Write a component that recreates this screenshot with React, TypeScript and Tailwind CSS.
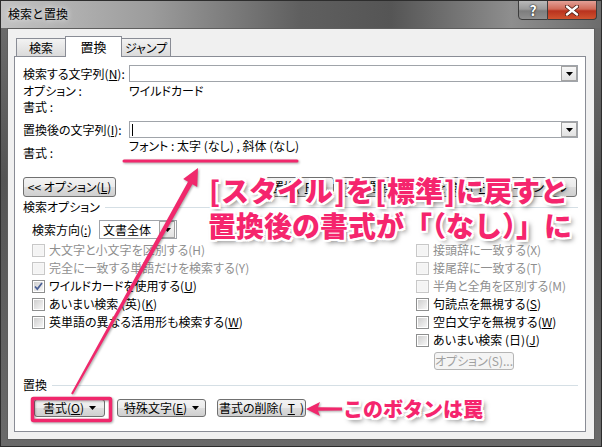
import React from 'react';

// mnemonic helper: underline the access key inside "(X)"
function Mn({ text, k, u = true }: { text: string; k?: string; u?: boolean }) {
  if (!k || !u) return <>{text}</>;
  const i = text.lastIndexOf(`(${k})`);
  if (i < 0) return <>{text}</>;
  return (
    <>
      {text.slice(0, i + 1)}
      <span className="underline underline-offset-[1px]">{k}</span>
      {text.slice(i + 2)}
    </>
  );
}

function Caret() {
  return (
    <svg width="7" height="4" viewBox="0 0 7 4">
      <path d="M0 0h7L3.5 4z" fill="#000" />
    </svg>
  );
}

function DropPart() {
  return (
    <div className="w-[16px] h-[15px] border border-[#a3a3a3] bg-[linear-gradient(#f7f7f7,#e2e2e2)] flex items-center justify-center">
      <Caret />
    </div>
  );
}

function Combo({ cursor }: { cursor?: boolean }) {
  return (
    <div className="flex-1 h-[17px] border border-[#a0a4aa] bg-white flex items-center justify-between pl-[2px]">
      {cursor ? <div className="w-px h-[12px] bg-black" /> : <div />}
      <DropPart />
    </div>
  );
}

function Btn({ children, className = '', disabled }: { children: React.ReactNode; className?: string; disabled?: boolean }) {
  return (
    <div
      className={`rounded-[3px] border flex items-center justify-center gap-[5px] text-[12px] leading-none whitespace-nowrap ${
        disabled
          ? 'border-[#b5b5b5] bg-[#f4f4f4] text-[#a0a0a0]'
          : 'border-[#707070] bg-[linear-gradient(#f3f3f3_0%,#ebebeb_50%,#dddddd_51%,#cfcfcf_100%)] text-black'
      } ${className}`}
    >
      {children}
    </div>
  );
}

function Check({ label, k, disabled, checked }: { label: string; k?: string; disabled?: boolean; checked?: boolean }) {
  return (
    <div className="h-[18px] flex items-center gap-[4px] whitespace-nowrap">
      <div
        className={`w-[13px] h-[13px] border p-[1px] ${disabled ? 'border-[#c8c8c8] bg-[#f7f7f7]' : 'border-[#8e8f8f] bg-white'}`}
      >
        <div
          className={`w-full h-full flex items-center justify-center ${
            disabled ? 'bg-[#f4f4f4]' : 'bg-[linear-gradient(135deg,#cfcfcf,#f6f6f6)]'
          }`}
        >
          {checked && (
            <svg width="9" height="9" viewBox="0 0 9 9">
              <path d="M1 4.5l2.3 2.6L8 1" stroke="#4a5f95" strokeWidth="1.7" fill="none" />
            </svg>
          )}
        </div>
      </div>
      <span className={disabled ? 'text-[#8f8f8f]' : 'text-black'}>
        <Mn text={label} k={k} u={!disabled} />
      </span>
    </div>
  );
}

function Group({ label }: { label: string }) {
  return (
    <div className="h-[16px] flex items-center gap-[5px]">
      <span>{label}</span>
      <div className="flex-1 h-px bg-[#d5dfe5]" />
    </div>
  );
}

const calloutShadow =
  '[text-shadow:-2px_-2px_0_#fff,2px_-2px_0_#fff,-2px_2px_0_#fff,2px_2px_0_#fff,0_-2px_0_#fff,0_2px_0_#fff,-2px_0_0_#fff,2px_0_0_#fff,3px_3px_5px_rgba(0,0,0,0.55)]';

export default function App() {
  return (
    <div className="relative w-[602px] h-[447px] overflow-hidden border border-[#2d2d2d] bg-[linear-gradient(#6e6e6e,#545454_40%,#6a6a6a)] text-black [font-family:'Noto_Sans_CJK_JP','Liberation_Sans',sans-serif]">
      {/* title bar */}
      <div className="h-[27px] flex justify-between bg-[linear-gradient(90deg,#c2c2c2_0%,#9c9c9c_25%,#5f5f5f_50%,#555555_65%,#8e8e8e_85%,#6c6c6c_100%)]">
        <div className="pl-[7px] pt-[5px] text-[12px] leading-[16px] [text-shadow:0_0_6px_#fff]">検索と置換</div>
        <div className="flex items-start mr-[4px] -mt-px">
          <div className="w-[30px] h-[20px] rounded-bl-[4px] border border-[#3c3c3c] bg-[linear-gradient(#b9b9b9_0%,#9a9a9a_45%,#7d7d7d_55%,#8f8f8f_100%)] flex items-center justify-center text-white font-bold text-[14px] leading-none [text-shadow:0_0_2px_#222,0_0_1px_#000]">
            ?
          </div>
          <div className="w-[49px] h-[20px] rounded-br-[4px] border border-l-0 border-[#3c3c3c] bg-[linear-gradient(#e3a096_0%,#d06a58_45%,#b9321e_55%,#d0532f_100%)] flex items-center justify-center">
            <svg width="14" height="11" viewBox="0 0 14 11">
              <path d="M2 1.5l10 8M12 1.5l-10 8" stroke="#4a1a10" strokeWidth="4" strokeLinecap="round" />
              <path d="M2 1.5l10 8M12 1.5l-10 8" stroke="#fff" strokeWidth="2.4" strokeLinecap="round" />
            </svg>
          </div>
        </div>
      </div>

      {/* client area */}
      <div className="mx-[6px] h-[412px] border border-[#5e5e5e] bg-[#f0f0f0] pl-[6px] pr-[8px] pt-[7px] text-[12px] leading-[16px] [font-feature-settings:'palt']">
        <div className="flex items-end h-[20px] pl-[2px]">
          <div className="w-[50px] h-[18px] border border-b-0 border-[#898c95] bg-[linear-gradient(#f3f3f3,#dadada)] flex items-center justify-center">
            検索
          </div>
          <div className="relative z-10 w-[57px] h-[21px] -mb-px -ml-px border border-b-0 border-[#898c95] bg-white flex items-center justify-center text-[13px]">
            置換
          </div>
          <div className="w-[50px] h-[18px] -ml-px border border-b-0 border-[#898c95] bg-[linear-gradient(#f3f3f3,#dadada)] flex items-center justify-center">
            ジャンプ
          </div>
        </div>

        <div className="h-[376px] border border-[#898c95] bg-white pl-[8px] pr-[7px] pt-[8px] flex flex-col">
          <div className="flex h-[17px]">
            <div className="w-[106px] flex items-center">
              <Mn text="検索する文字列(N):" k="N" />
            </div>
            <Combo />
          </div>
          <div className="flex h-[16px] mt-[1px]">
            <div className="w-[106px]">オプション :</div>
            <div>ワイルドカード</div>
          </div>
          <div className="flex h-[16px]">
            <div className="w-[106px]">書式 :</div>
          </div>
          <div className="flex h-[17px] mt-[6px]">
            <div className="w-[106px] flex items-center">
              <Mn text="置換後の文字列(I):" k="I" />
            </div>
            <Combo cursor />
          </div>
          <div className="flex h-[24px]">
            <div className="w-[106px] pt-[7px]">書式 :</div>
            <div>フォント : 太字 (なし) , 斜体 (なし)</div>
          </div>

          <div className="flex h-[20px] mt-[15px]">
            <Btn className="w-[93px]">
              <span>
                &lt;&lt; <Mn text="オプション(L)" k="L" />
              </span>
            </Btn>
            <div className="flex-1 flex justify-end gap-[6px] pr-px">
              <Btn className="w-[75px]">
                <Mn text="置換(R)" k="R" />
              </Btn>
              <Btn className="w-[75px]">
                <Mn text="すべて置換(A)" k="A" />
              </Btn>
              <Btn className="w-[75px]">
                <Mn text="次を検索(F)" k="F" />
              </Btn>
              <Btn className="w-[75px]">キャンセル</Btn>
            </div>
          </div>

          <div className="mt-[2px]">
            <Group label="検索オプション" />
          </div>

          <div className="flex h-[19px] mt-[5px] pl-[9px] items-center">
            <div className="w-[67px]">
              検索方向(<span className="underline">:</span>)
            </div>
            <div className="w-[78px] h-[19px] border border-[#a0a4aa] bg-white flex items-center justify-between pl-[3px] pr-px">
              <span>文書全体</span>
              <div className="w-[16px] h-[17px] border border-[#a3a3a3] bg-[linear-gradient(#f7f7f7,#e2e2e2)] flex items-center justify-center">
                <Caret />
              </div>
            </div>
          </div>

          <div className="flex mt-[2px] pl-[9px]">
            <div className="w-[384px]">
              <Check label="大文字と小文字を区別する(H)" disabled />
              <Check label="完全に一致する単語だけを検索する(Y)" disabled />
              <Check label="ワイルドカードを使用する(U)" k="U" checked />
              <Check label="あいまい検索 (英)(K)" k="K" />
              <Check label="英単語の異なる活用形も検索する(W)" k="W" />
            </div>
            <div>
              <Check label="接頭辞に一致する(X)" disabled />
              <Check label="接尾辞に一致する(T)" disabled />
              <Check label="半角と全角を区別する(M)" disabled />
              <Check label="句読点を無視する(S)" k="S" />
              <Check label="空白文字を無視する(W)" k="W" />
              <Check label="あいまい検索 (日)(J)" k="J" />
              <Btn disabled className="w-[80px] h-[18px] ml-[18px] mt-[3px] text-[11px]">
                オプション(S)...
              </Btn>
            </div>
          </div>

          <div className="mt-[7px]">
            <Group label="置換" />
          </div>

          <div className="flex h-[18px] mt-[6px] pl-[11px]">
            <Btn className="w-[71px]">
              <span>
                <Mn text="書式(O)" k="O" />
              </span>
              <Caret />
            </Btn>
            <Btn className="w-[89px] ml-[12px]">
              <span>
                <Mn text="特殊文字(E)" k="E" />
              </span>
              <Caret />
            </Btn>
            <Btn className="w-[89px] ml-[11px]">
              <Mn text="書式の削除(T)" k="T" />
            </Btn>
          </div>
        </div>
      </div>

      {/* annotations drawn over the dialog */}
      <svg
        className="absolute left-0 top-0 pointer-events-none drop-shadow-[1px_1px_1px_rgba(0,0,0,0.35)]"
        width="602"
        height="447"
        viewBox="0 0 602 447"
      >
        <line x1="123" y1="160" x2="296" y2="160" stroke="#f0286c" strokeWidth="3" strokeLinecap="round" />
        <polygon
          points="197,167 196.2,186 191.4,183.2 71.9,393.5 70.1,392.5 187,180.7 182.2,178.1"
          fill="#f0286c"
        />
        <polygon points="305,408 319,401 317,406.2 341,406.5 341,409.5 317,409.8 319,415" fill="#f0286c" />
        <rect x="31.5" y="397.5" width="78" height="22" rx="1" fill="none" stroke="#f0286c" strokeWidth="3.5" />
      </svg>

      <div
        className={`absolute left-[207px] top-[172px] text-[28px] leading-[35px] font-black text-[#f5256d] whitespace-nowrap ${calloutShadow}`}
      >
        <div>
          <span className="inline-block w-[13px] text-center">[</span>スタイル
          <span className="inline-block w-[13px] text-center">]</span>を
          <span className="inline-block w-[13px] text-center">[</span>標準
          <span className="inline-block w-[13px] text-center">]</span>に戻すと
        </div>
        <div>置換後の書式が「（なし）」に</div>
      </div>

      <div
        className={`absolute left-[342px] top-[396px] text-[20px] leading-[24px] font-black text-[#f5256d] whitespace-nowrap ${calloutShadow}`}
      >
        このボタンは罠
      </div>
    </div>
  );
}
